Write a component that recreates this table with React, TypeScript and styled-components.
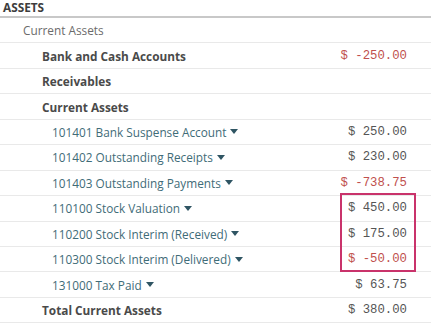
import React from "react";
import styled, { createGlobalStyle } from "styled-components";

const GlobalStyle = createGlobalStyle`
  body {
    margin: 0;
    background: #fff;
    font-family: "Open Sans", "Noto Sans", sans-serif;
  }
`;

const Report = styled.div`
  position: relative;
  width: 431px;
  overflow: hidden;
`;

const SectionHeader = styled.div`
  height: 16px;
  padding-left: 3px;
  border-bottom: 2px solid #c8c8c8;
  font-size: 11.8px;
  font-weight: 700;
  color: #3d3d3d;
  line-height: 15px;
`;

const Row = styled.div<{ $level: number }>`
  box-sizing: border-box;
  display: flex;
  align-items: center;
  justify-content: space-between;
  height: 25.45px;
  padding-left: ${(p) => [23, 42, 52][p.$level]}px;
  padding-right: 24px;
  border-bottom: 1px solid #e9e9e9;
`;

const Label = styled.span<{ $kind: "group" | "bold" | "account" }>`
  font-size: 11.8px;
  font-weight: ${(p) => (p.$kind === "bold" ? 700 : 400)};
  color: ${(p) =>
    p.$kind === "bold" ? "#4a4a4a" : p.$kind === "group" ? "#6b6b6b" : "#3f6c78"};
  display: inline-flex;
  align-items: center;
  gap: 4px;
`;

const Amount = styled.span<{ $negative?: boolean }>`
  font-family: "Liberation Mono", "DejaVu Sans Mono", monospace;
  font-size: 12.3px;
  color: ${(p) => (p.$negative ? "#c0504d" : "#555")};
  white-space: pre;
`;

const Highlight = styled.div`
  position: absolute;
  left: 340px;
  top: 193px;
  width: 76px;
  height: 79px;
  box-sizing: border-box;
  border: 2px solid #c9336b;
  pointer-events: none;
`;

const Caret = () => (
  <svg width="8" height="5" viewBox="0 0 8 5">
    <path d="M0 0 H8 L4 5 Z" fill="#2f5563" />
  </svg>
);

type Line = {
  label: string;
  level: number;
  kind: "group" | "bold" | "account";
  amount?: string;
  caret?: boolean;
};

const lines: Line[] = [
  { label: "Current Assets", level: 0, kind: "group" },
  { label: "Bank and Cash Accounts", level: 1, kind: "bold", amount: "$ -250.00" },
  { label: "Receivables", level: 1, kind: "bold" },
  { label: "Current Assets", level: 1, kind: "bold" },
  { label: "101401 Bank Suspense Account", level: 2, kind: "account", amount: "$ 250.00", caret: true },
  { label: "101402 Outstanding Receipts", level: 2, kind: "account", amount: "$ 230.00", caret: true },
  { label: "101403 Outstanding Payments", level: 2, kind: "account", amount: "$ -738.75", caret: true },
  { label: "110100 Stock Valuation", level: 2, kind: "account", amount: "$ 450.00", caret: true },
  { label: "110200 Stock Interim (Received)", level: 2, kind: "account", amount: "$ 175.00", caret: true },
  { label: "110300 Stock Interim (Delivered)", level: 2, kind: "account", amount: "$ -50.00", caret: true },
  { label: "131000 Tax Paid", level: 2, kind: "account", amount: "$ 63.75", caret: true },
  { label: "Total Current Assets", level: 1, kind: "bold", amount: "$ 380.00" },
];

const App = () => {
  return (
    <Report>
      <GlobalStyle />
      <SectionHeader>ASSETS</SectionHeader>
      {lines.map((l, i) => (
        <Row key={i} $level={l.level}>
          <Label $kind={l.kind}>
            {l.label}
            {l.caret && <Caret />}
          </Label>
          {l.amount && (
            <Amount $negative={l.amount.includes("-")}>{l.amount}</Amount>
          )}
        </Row>
      ))}
      <Highlight />
    </Report>
  );
};

export default App;
